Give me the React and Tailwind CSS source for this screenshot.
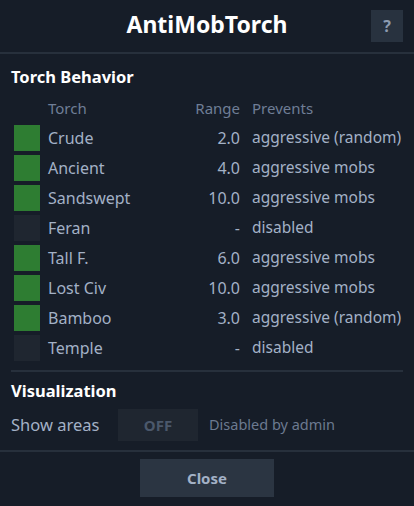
import React from "react";

const torches = [
  { name: "Crude", on: true, range: "2.0", prevents: "aggressive (random)" },
  { name: "Ancient", on: true, range: "4.0", prevents: "aggressive mobs" },
  { name: "Sandswept", on: true, range: "10.0", prevents: "aggressive mobs" },
  { name: "Feran", on: false, range: "-", prevents: "disabled" },
  { name: "Tall F.", on: true, range: "6.0", prevents: "aggressive mobs" },
  { name: "Lost Civ", on: true, range: "10.0", prevents: "aggressive mobs" },
  { name: "Bamboo", on: true, range: "3.0", prevents: "aggressive (random)" },
  { name: "Temple", on: false, range: "-", prevents: "disabled" },
];

export default function App() {
  return (
    <div
      className="w-[414px] h-[506px] bg-[#161d28] flex flex-col overflow-hidden"
      style={{ fontFamily: "'Noto Sans', Lato, sans-serif" }}
    >
      <div className="relative h-[54px] shrink-0 flex items-center justify-center border-b-2 border-[#27303c]">
        <h1 className="text-[23px] font-bold text-white -mt-[3px]">AntiMobTorch</h1>
        <button className="absolute right-[11px] top-[10px] w-8 h-8 bg-[#28323f] text-[#8d9bb0] font-bold text-[16px] flex items-center justify-center">
          ?
        </button>
      </div>

      <div className="px-[11px] flex-1 flex flex-col">
        <h2 className="mt-[13px] text-[16.5px] font-bold text-white leading-5">Torch Behavior</h2>

        <div className="mt-[9px] flex items-center h-[24px] text-[15px] text-[#6f7e96]">
          <span className="ml-[37px] w-[120px] shrink-0">Torch</span>
          <span className="w-[72px] shrink-0 text-right">Range</span>
          <span className="ml-[12px]">Prevents</span>
        </div>

        <div className="mt-[3px] flex flex-col">
          {torches.map((t) => (
            <div key={t.name} className="flex items-center h-[30px] text-[16px] text-[#a3b1c6]">
              <div
                className={
                  "ml-[3px] w-[26px] h-[26px] shrink-0 " +
                  (t.on ? "bg-[#2e7d32]" : "bg-[#1f2630]")
                }
              />
              <span className="ml-[8px] w-[120px] shrink-0">{t.name}</span>
              <span className="w-[72px] shrink-0 text-right">{t.range}</span>
              <span className="ml-[12px] whitespace-nowrap text-[15.5px]">{t.prevents}</span>
            </div>
          ))}
        </div>

        <div className="mt-[7px] border-t-2 border-[#27303c]" />

        <h2 className="mt-[9px] text-[16.5px] font-bold text-white leading-5">Visualization</h2>

        <div className="mt-[8px] flex items-center h-[32px]">
          <span className="text-[16.5px] text-[#a3b1c6] w-[107px] shrink-0">Show areas</span>
          <div className="w-[80px] h-[32px] shrink-0 bg-[#1f2630] flex items-center justify-center text-[15px] font-bold text-[#4b586b]">
            OFF
          </div>
          <span className="ml-[11px] text-[14.5px] text-[#6c7a90]">Disabled by admin</span>
        </div>
      </div>

      <div className="h-[56px] shrink-0 border-t-2 border-[#27303c] flex items-start justify-center pt-[7px]">
        <button className="w-[134px] h-[38px] bg-[#2b3542] text-[#a3b1c6] font-bold text-[15px]">
          Close
        </button>
      </div>
    </div>
  );
}
